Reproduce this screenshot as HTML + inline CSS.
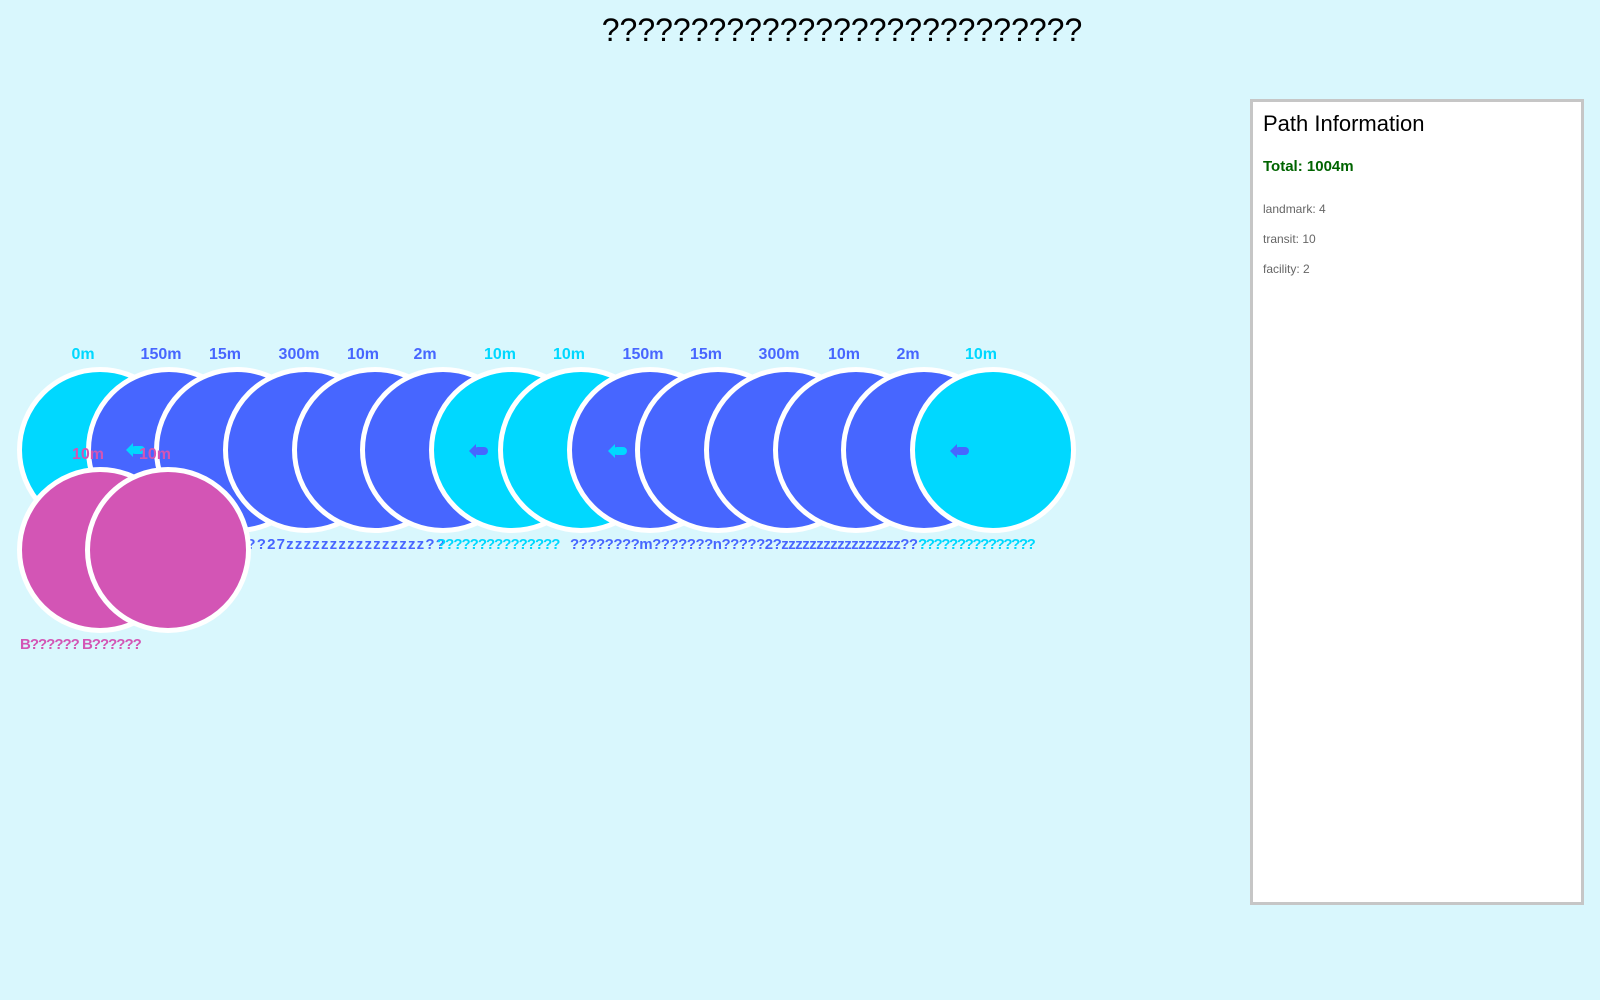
<!DOCTYPE html>
<html><head><meta charset="utf-8"><style>
html,body{margin:0;padding:0;}
body{width:1600px;height:1000px;background:#d9f7fd;position:relative;overflow:hidden;font-family:"Liberation Sans",sans-serif;}
.t{position:absolute;left:0;width:1600px;top:12px;text-align:center;font-size:32px;color:#000;padding-left:84px;box-sizing:border-box;}
.c{position:absolute;width:156px;height:156px;border-radius:50%;border:5px solid #fff;}
.l{position:absolute;font-weight:bold;font-size:16px;transform:translateX(-50%);white-space:nowrap;}
.q{position:absolute;font-weight:bold;font-size:15px;white-space:nowrap;letter-spacing:-1px;}
.panel{position:absolute;left:1250px;top:99px;width:328px;height:800px;background:#fff;border:3px solid #c6c6c6;}
.panel h2{margin:0;position:absolute;left:10px;top:9px;font-size:22px;font-weight:normal;}
.panel .tot{position:absolute;left:10px;top:56px;color:#006400;font-weight:bold;font-size:15px;}
.panel .s{position:absolute;left:10px;font-size:12px;color:#666;}
.ar{position:absolute;width:14px;height:8px;border-radius:4px;}
.ar:before{content:"";position:absolute;left:-5px;top:-3px;border-right:7px solid;border-right-color:inherit;border-top:7px solid transparent;border-bottom:7px solid transparent;}
</style></head><body>
<div class="t">???????????????????????????</div>

<div class="c" style="left:17px;top:367px;background:#00d8ff"></div>
<div class="c" style="left:86px;top:367px;background:#4766ff"></div>
<div class="c" style="left:154px;top:367px;background:#4766ff"></div>
<div class="c" style="left:223px;top:367px;background:#4766ff"></div>
<div class="c" style="left:292px;top:367px;background:#4766ff"></div>
<div class="c" style="left:360px;top:367px;background:#4766ff"></div>
<div class="c" style="left:429px;top:367px;background:#00d8ff"></div>
<div class="c" style="left:498px;top:367px;background:#00d8ff"></div>
<div class="c" style="left:567px;top:367px;background:#4766ff"></div>
<div class="c" style="left:635px;top:367px;background:#4766ff"></div>
<div class="c" style="left:704px;top:367px;background:#4766ff"></div>
<div class="c" style="left:773px;top:367px;background:#4766ff"></div>
<div class="c" style="left:841px;top:367px;background:#4766ff"></div>
<div class="c" style="left:910px;top:367px;background:#00d8ff"></div>

<div class="ar" style="left:131px;top:446px;background:#00d8ff;border-color:#00d8ff"></div>
<div class="ar" style="left:474px;top:447px;background:#4766ff;border-color:#4766ff"></div>
<div class="ar" style="left:613px;top:447px;background:#00d8ff;border-color:#00d8ff"></div>
<div class="ar" style="left:955px;top:447px;background:#4766ff;border-color:#4766ff"></div>

<div class="l" style="left:83px;top:346px;color:#00d8ff">0m</div>
<div class="l" style="left:161px;top:346px;color:#4766ff">150m</div>
<div class="l" style="left:225px;top:346px;color:#4766ff">15m</div>
<div class="l" style="left:299px;top:346px;color:#4766ff">300m</div>
<div class="l" style="left:363px;top:346px;color:#4766ff">10m</div>
<div class="l" style="left:425px;top:346px;color:#4766ff">2m</div>
<div class="l" style="left:500px;top:346px;color:#00d8ff">10m</div>
<div class="l" style="left:569px;top:346px;color:#00d8ff">10m</div>
<div class="l" style="left:643px;top:346px;color:#4766ff">150m</div>
<div class="l" style="left:706px;top:346px;color:#4766ff">15m</div>
<div class="l" style="left:779px;top:346px;color:#4766ff">300m</div>
<div class="l" style="left:844px;top:346px;color:#4766ff">10m</div>
<div class="l" style="left:908px;top:346px;color:#4766ff">2m</div>
<div class="l" style="left:981px;top:346px;color:#00d8ff">10m</div>

<div class="q" style="left:236px;top:536px;color:#4766ff;letter-spacing:1.2px">???27zzzzzzzzzzzzzzzz??</div>
<div class="q" style="left:437px;top:536px;color:#00d8ff">???????????????</div>
<div class="q" style="left:570px;top:536px;color:#4766ff;letter-spacing:-0.5px">????????m???????n?????2?zzzzzzzzzzzzzzzzz??</div>
<div class="q" style="left:918px;top:536px;color:#00d8ff;letter-spacing:-1.4px">???????????????</div>

<div class="c" style="left:17px;top:467px;background:#d355b5"></div>
<div class="c" style="left:85px;top:467px;background:#d355b5"></div>
<div class="l" style="left:88px;top:446px;color:#d355b5">10m</div>
<div class="l" style="left:155px;top:446px;color:#d355b5">10m</div>
<div class="q" style="left:20px;top:636px;color:#d355b5">B?????? B??????</div>

<div class="panel">
<h2>Path Information</h2>
<div class="tot">Total: 1004m</div>
<div class="s" style="top:100px">landmark: 4</div>
<div class="s" style="top:130px">transit: 10</div>
<div class="s" style="top:160px">facility: 2</div>
</div>
</body></html>
